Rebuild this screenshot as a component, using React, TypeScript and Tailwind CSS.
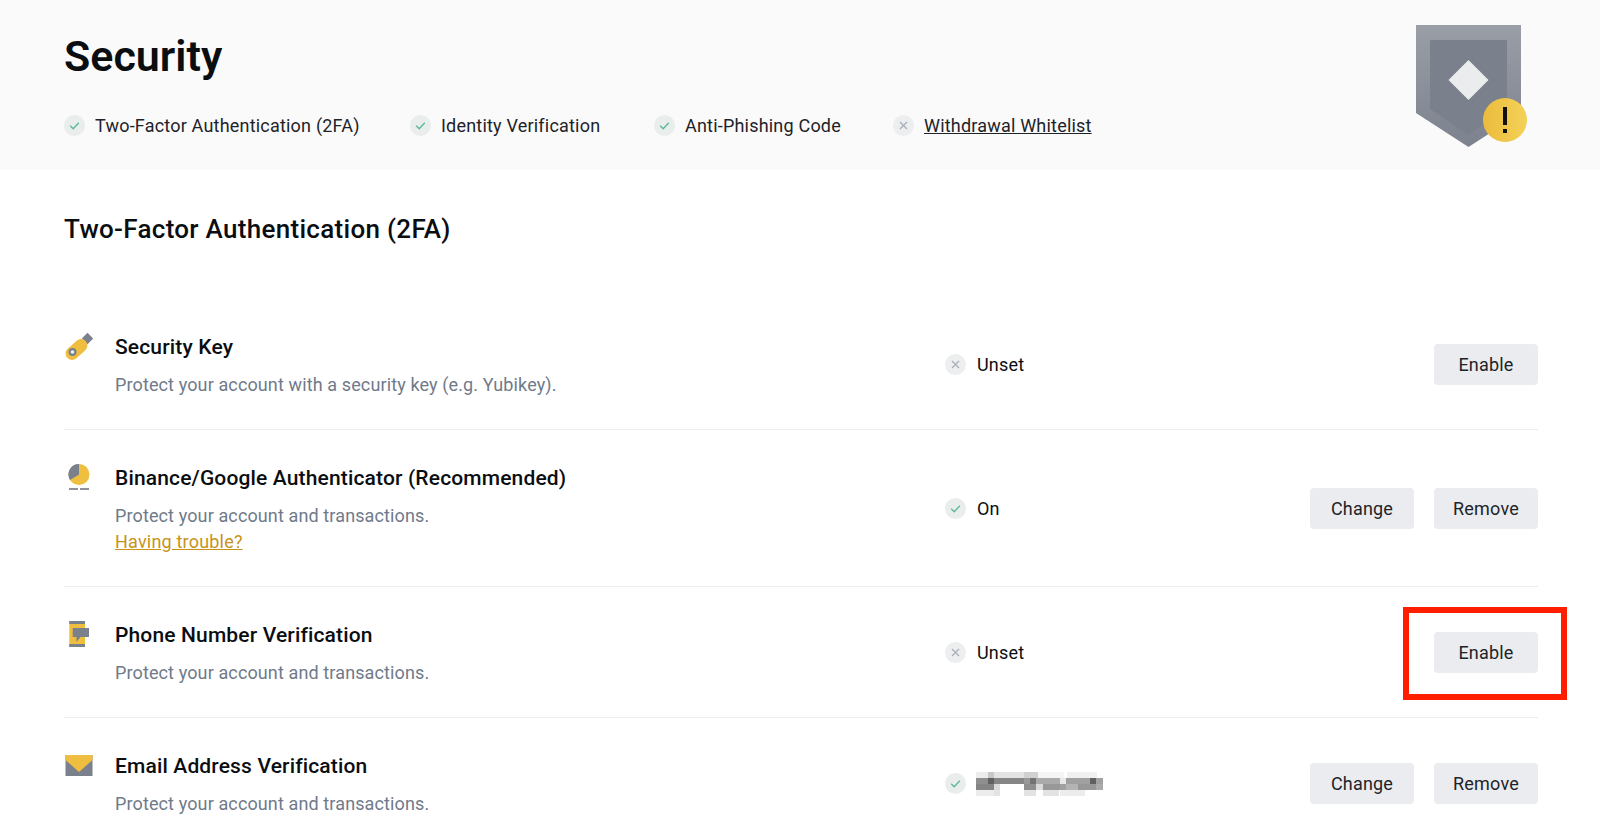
import React from 'react';

// Status badge used in header strip and rows
function StatusIcon({ ok }: { ok: boolean }) {
  return (
    <svg width="21" height="21" viewBox="0 0 21 21" className="shrink-0">
      <circle cx="10.5" cy="10.5" r="10.5" fill={ok ? '#e9edec' : '#eceef0'} />
      {ok ? (
        <path d="M6.2 10.8l3 3 5.6-6" fill="none" stroke="#5cb892" strokeWidth="1.3" />
      ) : (
        <path d="M7 7l7 7M14 7l-7 7" fill="none" stroke="#a9afb8" strokeWidth="1.3" />
      )}
    </svg>
  );
}

function KeyIcon() {
  return (
    <svg width="30" height="30" viewBox="0 0 30 30">
      <rect x="19.500" y="2.500" width="8" height="8" transform="rotate(45 23.500 6.500)" fill="#7a808c" />
      <rect x="0" y="11" width="25" height="13" rx="6.500" transform="rotate(-42 12.500 17.500)" fill="#efbe3e" />
      <circle cx="8.500" cy="20" r="4" fill="#7a808c" />
      <circle cx="8.500" cy="20" r="1.800" fill="#f1f1ee" />
    </svg>
  );
}

function AuthIcon() {
  return (
    <svg width="30" height="30" viewBox="0 0 30 30">
      <circle cx="15" cy="11.500" r="10.500" fill="#efc03f" />
      <path d="M15 11.500V1A10.500 10.500 0 0 0 6 17z" fill="#7a808c" />
      <rect x="5" y="25" width="9" height="2" fill="#8d929c" />
      <rect x="16" y="25" width="9" height="2" fill="#8d929c" />
    </svg>
  );
}

function PhoneIcon() {
  return (
    <svg width="30" height="30" viewBox="0 0 30 30">
      <rect x="5.300" y="1" width="15.700" height="26" fill="#efbe3e" />
      <rect x="5.300" y="1" width="15.700" height="3" fill="#7a808c" />
      <rect x="5.300" y="24" width="15.700" height="3" fill="#7a808c" />
      <path d="M8.700 8H25v9h-8.500l-4 5v-5H8.700z" fill="#7a808c" />
    </svg>
  );
}

function MailIcon() {
  return (
    <svg width="30" height="30" viewBox="0 0 30 30">
      <rect x="1.500" y="4" width="27" height="21" fill="#7a808c" />
      <path d="M1.500 4h27v5L15 21 1.500 9z" fill="#efbe3e" />
    </svg>
  );
}

function ShieldBadge() {
  return (
    <svg width="118" height="124" viewBox="0 0 118 124">
      <defs>
        <linearGradient id="shieldOuter" x1="0" y1="0" x2="0" y2="1">
          <stop offset="0" stopColor="#9a9ea6" />
          <stop offset="1" stopColor="#7c828e" />
        </linearGradient>
        <linearGradient id="badgeYellow" x1="0" y1="0" x2="1" y2="0">
          <stop offset="0" stopColor="#ecbb3c" />
          <stop offset="1" stopColor="#f3d258" />
        </linearGradient>
      </defs>
      <path d="M0 0h105v88l-52.500 34L0 88z" fill="url(#shieldOuter)" />
      <path d="M14 15h77v69l-38.500 26L14 84z" fill="#7a808c" />
      <path d="M52.500 35l20 20-20 20-20-20z" fill="#eaecee" />
      <circle cx="89" cy="95" r="22" fill="url(#badgeYellow)" />
      <rect x="87" y="82" width="4" height="18" fill="#111" />
      <rect x="87" y="104" width="4" height="4" fill="#111" />
    </svg>
  );
}

// pixelated email address, masked in the source image: [x, width, opacity] per row
const MOSAIC: number[][][] = [
  [[0, 12, 0.1], [12, 6, 0.3], [18, 30, 0.15], [48, 14, 0.25], [62, 26, 0.05], [91, 30, 0.08]],
  [[0, 12, 0.6], [12, 6, 0.85], [18, 30, 0.65], [48, 6, 0.55], [54, 6, 0.75], [60, 24, 0.45], [84, 6, 0.12], [90, 24, 0.5], [114, 6, 0.85], [120, 7, 0.5]],
  [[0, 18, 0.65], [18, 6, 0.2], [48, 12, 0.6], [60, 7, 0.2], [67, 17, 0.55], [84, 6, 0.5], [90, 12, 0.4], [102, 18, 0.55], [120, 7, 0.45]],
  [[0, 18, 0.1], [18, 6, 0.15], [48, 12, 0.15], [67, 16, 0.15], [84, 25, 0.1]],
];

function BlurredEmail() {
  return (
    <svg width="127" height="24" viewBox="0 0 127 24" className="mt-[2px] ml-[-1px]">
      {MOSAIC.map((row, r) =>
        row.map(([x, w, o]) => (
          <rect key={`${r}-${x}`} x={x} y={r * 6} width={w} height={6} fill="#444" opacity={o} />
        ))
      )}
    </svg>
  );
}

const STRIP = [
  { label: 'Two-Factor Authentication (2FA)', ok: true, width: 'w-[346px]' },
  { label: 'Identity Verification', ok: true, width: 'w-[244px]' },
  { label: 'Anti-Phishing Code', ok: true, width: 'w-[239px]' },
  { label: 'Withdrawal Whitelist', ok: false, width: 'w-[210px]', link: true },
];

const BTN = 'w-[104px] h-[41px] rounded bg-[#eaecef] text-[#1e2329] text-[18px] tracking-[0.2px] flex items-center justify-center';

function Row({ icon, title, desc, status, extra, actions, last }: {
  icon: React.ReactNode;
  title: string;
  desc: string;
  status: React.ReactNode;
  extra?: React.ReactNode;
  actions: string[];
  last?: boolean;
}) {
  return (
    <div className={`flex items-center ${last ? 'pt-[31px]' : 'py-[31px] border-b border-[#eaecef]'}`}>
      <div className="w-[51px] shrink-0 self-start mt-[2px]">{icon}</div>
      <div className="w-[830px] shrink-0">
        <div className="text-[21px] tracking-[0.15px] leading-[34px] font-medium text-[#0b0e11] h-[34px]">{title}</div>
        <div className="text-[18px] tracking-[0.12px] leading-[26px] text-[#707a8a] mt-[8px]">{desc}</div>
        {extra}
      </div>
      <div className="flex items-center gap-[11px] flex-1 text-[18px] tracking-[0.2px] text-[#0b0e11]">{status}</div>
      <div className="flex gap-5">
        {actions.map((a) => (
          <button key={a} className={BTN}>{a}</button>
        ))}
      </div>
    </div>
  );
}

export default function App() {
  return (
    <div className="relative w-[1600px] h-[840px] overflow-hidden bg-white font-['Roboto','Liberation_Sans',sans-serif]">
      {/* HEADER */}
      <header className="h-[170px] bg-[#fafafa] pl-16 pr-[66px] flex justify-between">
        <div>
          <h1 className="text-[43px] leading-[48px] font-semibold text-[#0b0e11] pt-[32px] h-[112px]">Security</h1>
          <div className="flex items-center h-[26px]">
            {STRIP.map((s) => (
              <div key={s.label} className={`flex items-center gap-[10px] ${s.width}`}>
                <StatusIcon ok={s.ok} />
                <span className={`text-[18px] tracking-[0.2px] text-[#1e2329] whitespace-nowrap ${s.link ? 'underline' : ''}`}>{s.label}</span>
              </div>
            ))}
          </div>
        </div>
        <div className="pt-[25px]">
          <ShieldBadge />
        </div>
      </header>

      {/* 2FA LIST */}
      <main className="pl-16 pr-[62px]">
        <h2 className="text-[26px] tracking-[0.3px] leading-[32px] font-medium text-[#0b0e11] pt-[43px] h-[129px]">Two-Factor Authentication (2FA)</h2>
        <Row
          icon={<KeyIcon />}
          title="Security Key"
          desc="Protect your account with a security key (e.g. Yubikey)."
          status={<><StatusIcon ok={false} /><span>Unset</span></>}
          actions={['Enable']}
        />
        <Row
          icon={<AuthIcon />}
          title="Binance/Google Authenticator (Recommended)"
          desc="Protect your account and transactions."
          extra={<a className="block text-[18px] tracking-[0.2px] leading-[26px] text-[#c8921a] underline">Having trouble?</a>}
          status={<><StatusIcon ok /><span>On</span></>}
          actions={['Change', 'Remove']}
        />
        <Row
          icon={<PhoneIcon />}
          title="Phone Number Verification"
          desc="Protect your account and transactions."
          status={<><StatusIcon ok={false} /><span>Unset</span></>}
          actions={['Enable']}
        />
        <Row
          last
          icon={<MailIcon />}
          title="Email Address Verification"
          desc="Protect your account and transactions."
          status={<><StatusIcon ok /><BlurredEmail /></>}
          actions={['Change', 'Remove']}
        />
      </main>

      {/* annotation box */}
      <div className="absolute left-[1403px] top-[607px] w-[164px] h-[93px] border-[6px] border-[#ff1f00]" />
    </div>
  );
}
